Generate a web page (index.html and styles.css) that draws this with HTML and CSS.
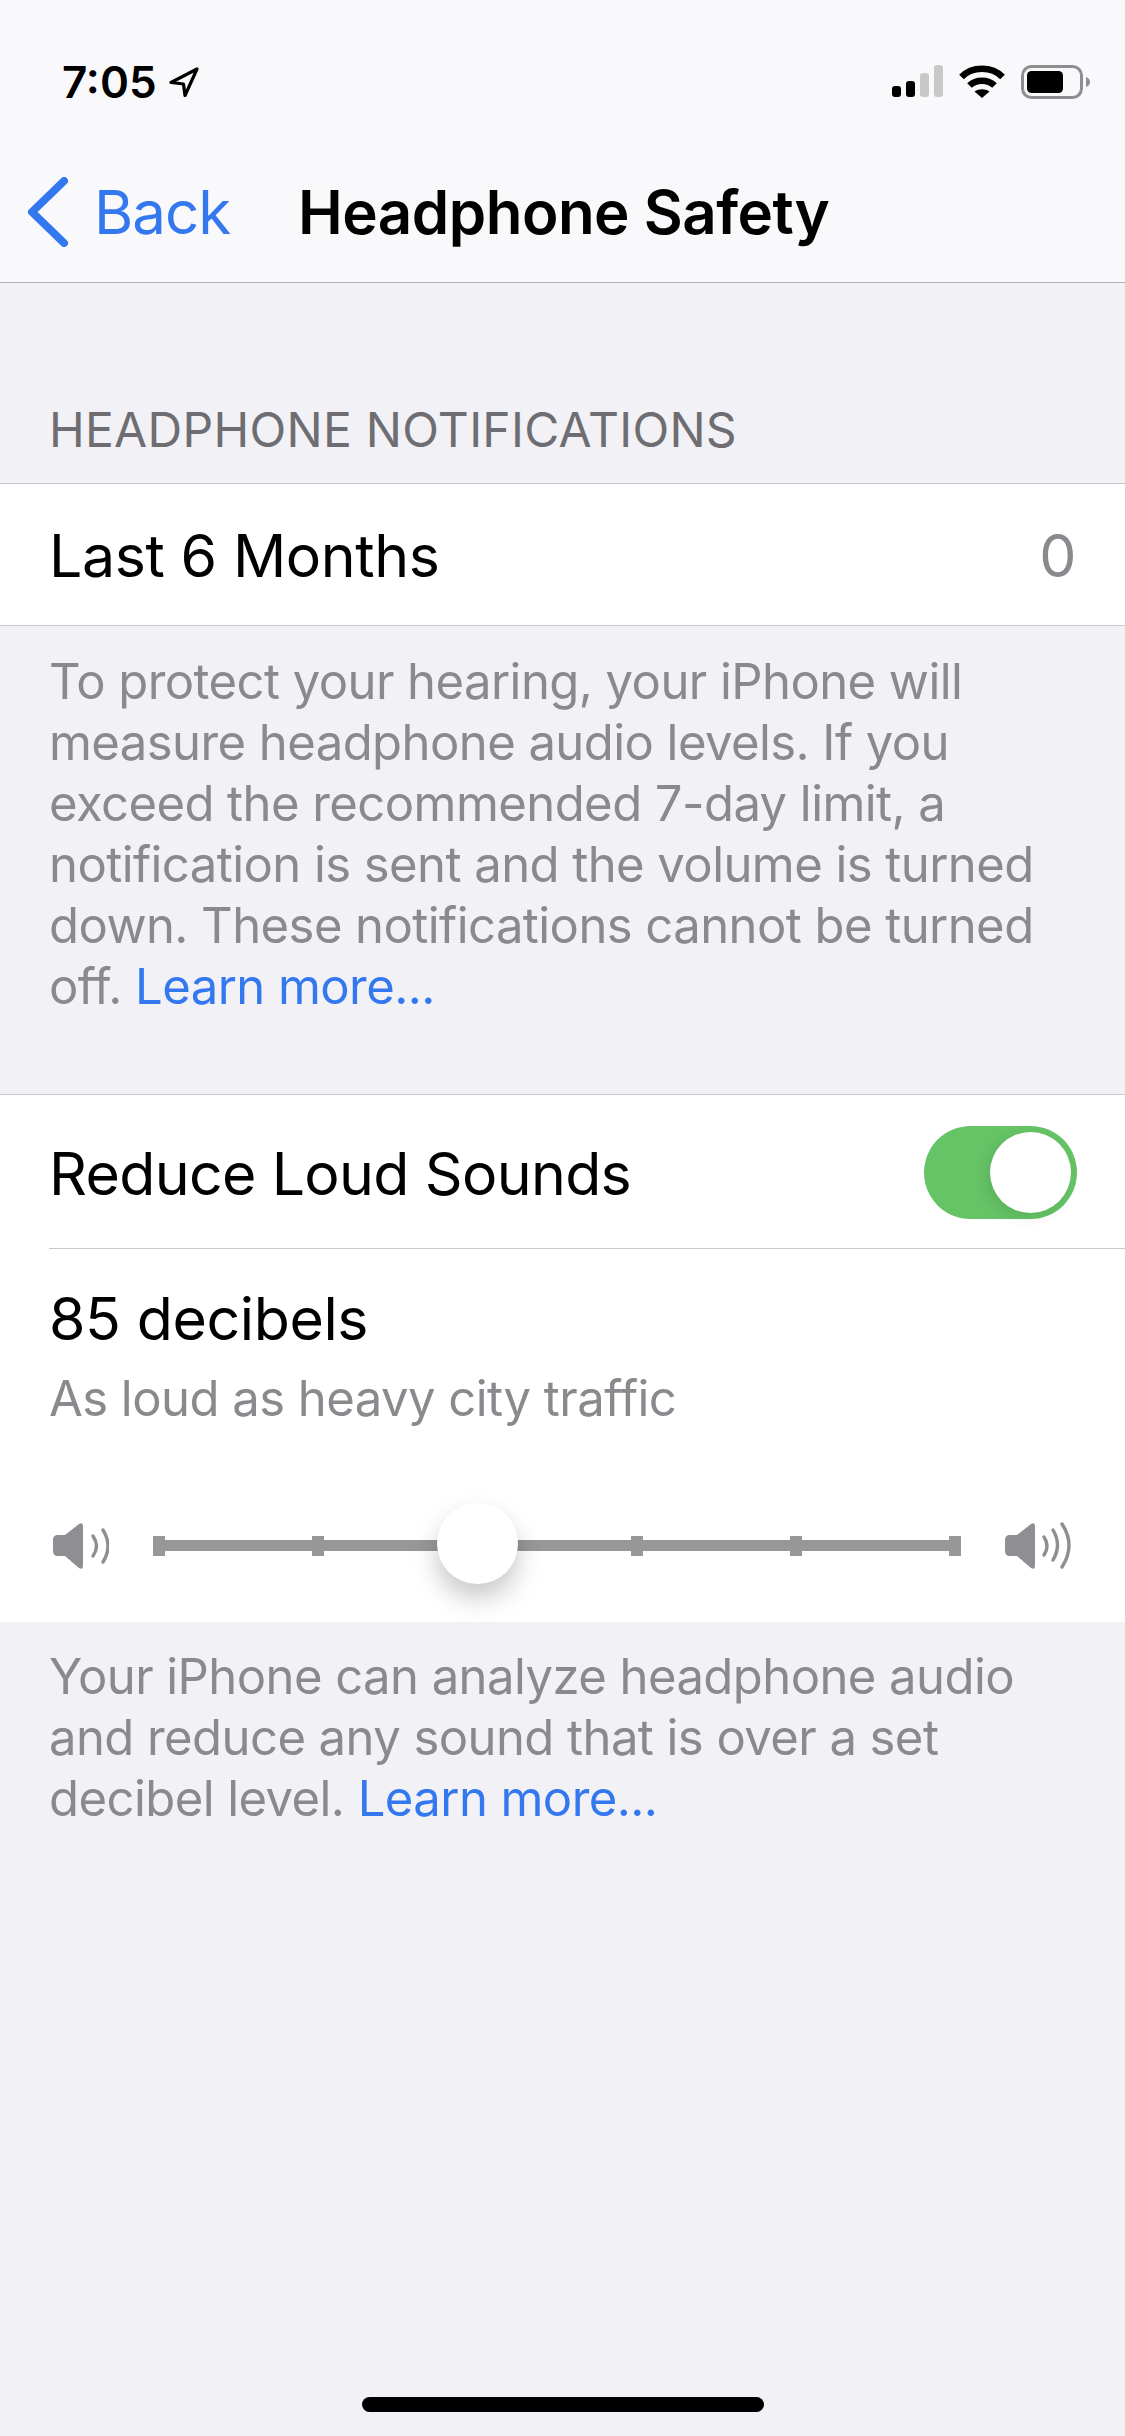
FILE: index.html
```html
<!DOCTYPE html>
<html lang="en">
<head>
    <meta charset="UTF-8">
    <meta name="viewport" content="width=device-width, initial-scale=1.0">
    <title>Headphone Safety</title>
    <link rel="stylesheet" href="styles.css">
</head>
<body>
    <div class="top-bar">
        <div class="status-bar">
            <div class="status-left">
                <span class="time">7:05</span>
                <svg class="location" width="30" height="30" viewBox="0 0 30 30"><path d="M28 2 L2 15.5 L14.5 17 L16 28.5 Z" fill="none" stroke="#000" stroke-width="3.2" stroke-linejoin="round"/></svg>
            </div>
            <div class="status-right">
                <svg width="51" height="33" viewBox="0 0 51 33">
                    <rect x="0" y="21" width="9" height="11" rx="3" fill="#000"/>
                    <rect x="14" y="16" width="9" height="16" rx="3" fill="#000"/>
                    <rect x="28" y="8" width="9" height="24" rx="3" fill="#c8c8c9"/>
                    <rect x="42" y="0" width="9" height="32" rx="3" fill="#c8c8c9"/>
                </svg>
                <svg width="46" height="33" viewBox="0 0 46 33">
                    <path d="M2.5 12 C13 1 33 1 43.5 12" fill="none" stroke="#000" stroke-width="6.5"/>
                    <path d="M10.5 20.5 C17 14 29 14 35.5 20.5" fill="none" stroke="#000" stroke-width="6.5"/>
                    <path d="M15.5 26.5 C20 23.5 26 23.5 30.5 26.5 L23 33 Z" fill="#000"/>
                </svg>
                <svg width="70" height="34" viewBox="0 0 70 34">
                    <rect x="1.5" y="1.5" width="59" height="31" rx="9" fill="none" stroke="#8e8e90" stroke-width="3"/>
                    <rect x="6" y="6" width="36" height="22" rx="4.5" fill="#000"/>
                    <path d="M65 12 C68 13 69 15 69 17 C69 19 68 21 65 22 Z" fill="#8e8e90"/>
                </svg>
            </div>
        </div>
        <div class="nav-bar">
            <a class="back">
                <svg width="42" height="70" viewBox="0 0 42 70"><path d="M37 4 L5 35 L37 66" fill="none" stroke="#3478f0" stroke-width="8" stroke-linecap="round" stroke-linejoin="round"/></svg>
                <span>Back</span>
            </a>
            <h1>Headphone Safety</h1>
        </div>
    </div>

    <div class="section-title">HEADPHONE NOTIFICATIONS</div>
    <div class="group">
        <div class="row">
            <span>Last 6 Months</span>
            <span class="value">0</span>
        </div>
    </div>
    <p class="footnote">To protect your hearing, your iPhone will measure headphone audio levels. If you exceed the recommended 7-day limit, a notification is sent and the volume is turned down. These notifications cannot be turned off. <a>Learn more...</a></p>

    <div class="group group-sounds">
        <div class="row row-toggle">
            <span>Reduce Loud Sounds</span>
            <div class="toggle"><div class="knob"></div></div>
        </div>
        <div class="level">
            <div class="level-name">85 decibels</div>
            <div class="level-desc">As loud as heavy city traffic</div>
            <div class="slider-row">
                <svg width="56" height="46" viewBox="0 0 56 46">
                    <path d="M0 17 Q0 12 5 12 H12 L26 1 Q30 -1 30 3 V43 Q30 47 26 45 L12 33 H5 Q0 33 0 28 Z" fill="#8e8e93"/>
                    <path d="M40 13 Q47 23 40 33" fill="none" stroke="#8e8e93" stroke-width="3.4" stroke-linecap="round"/>
                    <path d="M50 7 Q60 23 50 39" fill="none" stroke="#8e8e93" stroke-width="3.4" stroke-linecap="round"/>
                </svg>
                <div class="slider">
                    <div class="track"></div>
                    <div class="tick"></div>
                    <div class="tick"></div>
                    <div class="tick"></div>
                    <div class="tick"></div>
                    <div class="tick"></div>
                    <div class="tick"></div>
                    <div class="thumb"></div>
                </div>
                <svg width="67" height="47" viewBox="0 0 67 47">
                    <path d="M0 18 Q0 13 5 13 H12 L26 2 Q30 0 30 4 V44 Q30 48 26 46 L12 34 H5 Q0 34 0 29 Z" fill="#8e8e93"/>
                    <path d="M39 15 Q45 24 39 33" fill="none" stroke="#8e8e93" stroke-width="3.4" stroke-linecap="round"/>
                    <path d="M48 8 Q57 23 48 38" fill="none" stroke="#8e8e93" stroke-width="3.4" stroke-linecap="round"/>
                    <path d="M57 2 Q71 23 57 45" fill="none" stroke="#8e8e93" stroke-width="3.4" stroke-linecap="round"/>
                </svg>
            </div>
        </div>
    </div>
    <p class="footnote footnote-last">Your iPhone can analyze headphone audio and reduce any sound that is over a set decibel level. <a>Learn more...</a></p>

    <div class="home-indicator"></div>
</body>
</html>
```

FILE: styles.css
```css
html, body {
    margin: 0;
    padding: 0;
}

body {
    width: 1125px;
    height: 2436px;
    overflow: hidden;
    position: relative;
    background-color: #f1f1f6;
    font-family: Inter, 'Liberation Sans', sans-serif;
    font-size: 59px;
    letter-spacing: -0.4px;
    color: #000;
}

.top-bar {
    height: 283px;
    box-sizing: border-box;
    background-color: #f9f9fc;
    border-bottom: 1px solid #b2b2b4;
}

.status-bar {
    height: 146px;
    box-sizing: border-box;
    padding: 65px 34px 0 62px;
    display: flex;
    justify-content: space-between;
    align-items: flex-start;
}

.status-left {
    display: flex;
    align-items: center;
    gap: 12px;
}

.time {
    font-size: 44px;
    font-weight: 600;
    line-height: 34px;
    letter-spacing: 0;
}

.status-right {
    display: flex;
    align-items: flex-start;
    gap: 16px;
}

.nav-bar {
    display: flex;
    align-items: center;
    height: 132px;
    padding-left: 27px;
}

.back {
    display: flex;
    align-items: center;
    gap: 25px;
    width: 271px;
    font-size: 60px;
    letter-spacing: -1px;
    color: #3478f0;
}

h1 {
    margin: 0;
    font-size: 60px;
    font-weight: 600;
    letter-spacing: -0.5px;
}

.section-title {
    padding: 120px 49px 0;
    height: 80px;
    line-height: 54px;
    font-size: 48px;
    letter-spacing: 0.3px;
    color: #6d6d72;
}

.group {
    background-color: #fff;
    border-top: 1px solid #c8c8cc;
    border-bottom: 1px solid #c8c8cc;
}

.row {
    height: 141px;
    padding: 0 49px;
    display: flex;
    justify-content: space-between;
    align-items: center;
}

.row > span {
    padding-top: 2px;
}

.value {
    color: #8a8a8e;
}

.footnote {
    margin: 0;
    padding: 25px 49px 0;
    height: 468px;
    box-sizing: border-box;
    font-size: 49px;
    letter-spacing: -0.56px;
    line-height: 61px;
    color: #8a8a8e;
}

.footnote a {
    color: #3478f0;
}

.group-sounds {
    border-bottom: none;
}

.row-toggle {
    height: 154px;
    padding-right: 48px;
    position: relative;
    letter-spacing: -0.65px;
}

.row-toggle::after {
    content: "";
    position: absolute;
    left: 49px;
    right: 0;
    bottom: 0;
    border-bottom: 1px solid #c8c8cc;
}

.toggle {
    width: 153px;
    height: 93px;
    box-sizing: border-box;
    padding: 6px;
    border-radius: 47px;
    background-color: #65c466;
    display: flex;
    justify-content: flex-end;
}

.knob {
    width: 81px;
    height: 81px;
    border-radius: 50%;
    background-color: #fff;
    box-shadow: -4px 4px 14px rgba(0, 0, 0, 0.1);
}

.level {
    height: 373px;
    padding: 35px 49px 0;
    box-sizing: border-box;
    position: relative;
}

.level-name {
    line-height: 70px;
}

.level-desc {
    margin-top: 14px;
    font-size: 49px;
    letter-spacing: -0.53px;
    line-height: 61px;
    color: #8a8a8e;
}

.slider-row {
    margin-top: 93px;
    margin-left: 4px;
    display: flex;
    align-items: center;
    gap: 44px;
}

.slider {
    position: relative;
    width: 808px;
    height: 20px;
    flex: none;
    display: flex;
    justify-content: space-between;
    align-items: center;
}

.track {
    position: absolute;
    left: 0;
    right: 0;
    top: 4px;
    height: 11px;
    background-color: #979797;
}

.tick {
    position: relative;
    width: 12px;
    height: 20px;
    background-color: #979797;
}

.thumb {
    position: absolute;
    left: 284px;
    top: -33px;
    width: 81px;
    height: 81px;
    border-radius: 50%;
    background-color: #fff;
    box-shadow: 0 14px 26px rgba(0, 0, 0, 0.22);
}

.footnote-last {
    padding-top: 24px;
}

.home-indicator {
    position: absolute;
    left: 362px;
    top: 2397px;
    width: 402px;
    height: 15px;
    border-radius: 8px;
    background-color: #000;
}
```
